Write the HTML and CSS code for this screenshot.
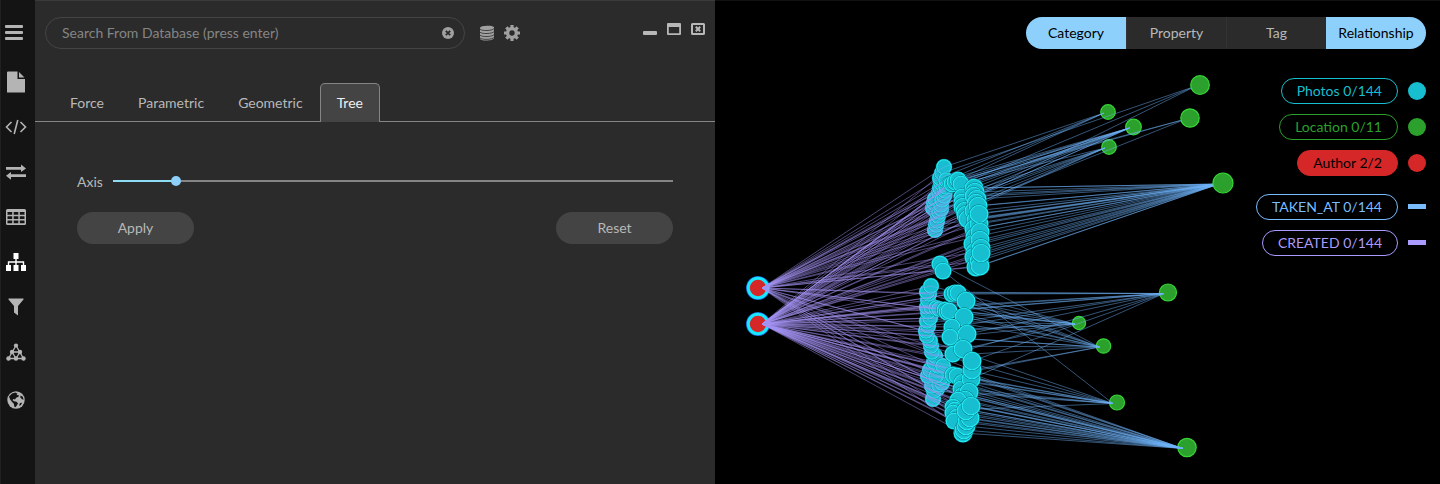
FILE: index.html
```html
<!DOCTYPE html>
<html lang="en">
<head>
<meta charset="utf-8">
<meta name="viewport" content="width=device-width, initial-scale=1">
<title>Graph explorer</title>
<link rel="stylesheet" href="styles.css">
</head>
<body>
<div class="app">
  <nav class="rail" aria-label="Tools">
    <button class="rail-btn rail-menu" aria-label="Menu"><svg width="18" height="16" viewBox="0 0 18 16"><path d="M1 1.500h16M1 7.500h16M1 13.500h16" stroke="currentColor" stroke-width="2.800" stroke-linecap="round"/></svg></button>
    <button class="rail-btn" aria-label="File"><svg width="18" height="22" viewBox="0 0 18 22"><path fill="currentColor" d="M1 .5h9.500v7.500H18V21a.6.6 0 0 1-.6.6H.6A.6.6 0 0 1 0 21V1.500a1 1 0 0 1 1-1zM12 1l5.500 5.500H12z"/></svg></button>
    <button class="rail-btn" aria-label="Code"><svg width="22" height="16" viewBox="0 0 22 16"><path d="M6.500 3 1.500 8l5 5M15.500 3l5 5-5 5M12.800 1 9.200 15" fill="none" stroke="currentColor" stroke-width="1.600"/></svg></button>
    <button class="rail-btn" aria-label="Swap"><svg width="22" height="16" viewBox="0 0 22 16"><path fill="currentColor" d="M1 3h15V.5L21 4.500 16 8V5.800H1zM21 10.300H6V8L1 11.700l5 4V13h15z"/></svg></button>
    <button class="rail-btn" aria-label="Table"><svg width="20" height="16" viewBox="0 0 20 16"><path fill="currentColor" fill-rule="evenodd" d="M1.500 0h17A1.500 1.500 0 0 1 20 1.500v13a1.500 1.500 0 0 1-1.500 1.500h-17A1.500 1.500 0 0 1 0 14.500v-13A1.500 1.500 0 0 1 1.500 0zM1.500 3v2.800h4.700V3zm6.200 0v2.800h4.600V3zm6.100 0v2.800h4.700V3zM1.500 7.200v2.800h4.700V7.200zm6.200 0v2.800h4.600V7.200zm6.100 0v2.800h4.700V7.200zM1.500 11.500v2.800h4.700v-2.800zm6.200 0v2.800h4.600v-2.800zm6.100 0v2.800h4.700v-2.800z"/></svg></button>
    <button class="rail-btn rail-active" aria-label="Layout"><svg width="22" height="18" viewBox="0 0 22 18"><path fill="currentColor" d="M8.500 0h5v6h-5zM1 12h5v6H1zM8.500 12h5v6h-5zM16 12h5v6h-5z"/><path d="M11 5v8M3.500 12.500V9h15v3.500" fill="none" stroke="currentColor" stroke-width="1.400"/></svg></button>
    <button class="rail-btn" aria-label="Filter"><svg width="16" height="18" viewBox="0 0 16 18"><path fill="currentColor" d="M.5.500h15v1L10 8v9.500L6 14.500V8L.5 1.500z"/></svg></button>
    <button class="rail-btn" aria-label="Network"><svg width="20" height="18" viewBox="0 0 20 18"><path d="M10 2.500 2.500 15.500h15zM6 9h8l-4 6.500z" fill="none" stroke="currentColor" stroke-width="1.300"/><g fill="currentColor"><circle cx="10" cy="2.500" r="2.100"/><circle cx="6" cy="9" r="2.200"/><circle cx="14" cy="9" r="2.200"/><circle cx="2.500" cy="15.500" r="2.200"/><circle cx="10" cy="15.500" r="2.200"/><circle cx="17.500" cy="15.500" r="2.200"/></g></svg></button>
    <button class="rail-btn rail-globe" aria-label="Globe"><svg width="18" height="18" viewBox="0 0 18 18"><circle cx="9" cy="9" r="8.700" fill="currentColor"/><path fill="#141414" d="M5 2.500 8.500 1.500l2 1.200-1 1.300 2.500.2-.5 1.600-2.300 1L8 8.500 6.300 8 5.500 9.200l1.600 1 2.400.5 1.500 1.500-1 2-1.600 2-1-.5-.6-3-1.900-2L3 8.300 2 5.600zM13.500 4.500l2.300 1.200.8 3-1.500-.4-1.800-1.700zM13 12l2.200-.3-1.500 2.500-1.700.6z"/></svg></button>
  </nav>

  <main class="panel">
    <header class="bar">
      <form class="search">
        <input class="search-input" type="text" aria-label="Search from database" placeholder="Search From Database (press enter)">
        <button class="icon-btn" type="reset" aria-label="Clear"><svg width="12" height="12" viewBox="0 0 12 12"><circle cx="6" cy="6" r="6" fill="currentColor"/><path d="m3.800 3.800 4.400 4.400M8.200 3.800 3.800 8.200" stroke="#2b2b2b" stroke-width="1.800"/></svg></button>
      </form>
      <button class="icon-btn" aria-label="Database"><svg width="16" height="16" viewBox="0 0 16 16"><path fill="currentColor" d="M1 3C1 .5 15 0 15 2.500V13c0 3-14 3.500-14 .5z"/><path d="M1 4.200c2 2 12 1.700 14-.5M1 7.200c2 2 12 1.700 14-.5M1 10.200c2 2 12 1.700 14-.5M1 13c2 2 12 1.700 14-.5" fill="none" stroke="#2b2b2b" stroke-width=".8"/></svg></button>
      <button class="icon-btn" aria-label="Settings"><svg width="16" height="16" viewBox="0 0 16 16"><circle cx="8" cy="8" r="4.400" fill="none" stroke="currentColor" stroke-width="3.400"/><path d="M8 0v3M8 13v3M0 8h3M13 8h3M2.300 2.300l2 2M11.700 11.700l2 2M13.700 2.300l-2 2M4.300 11.700l-2 2" stroke="currentColor" stroke-width="3.200"/></svg></button>
      <div class="window-btns">
        <button class="icon-btn" aria-label="Minimize"><svg width="14" height="14" viewBox="0 0 14 14"><rect y="9" width="14" height="4" rx="1" fill="currentColor"/></svg></button>
        <button class="icon-btn" aria-label="Maximize"><svg width="14" height="14" viewBox="0 0 14 14"><path fill="currentColor" fill-rule="evenodd" d="M1 1h12a1 1 0 0 1 1 1v10a1 1 0 0 1-1 1H1a1 1 0 0 1-1-1V2a1 1 0 0 1 1-1zm.8 4v6.200h10.400V5z"/></svg></button>
        <button class="icon-btn" aria-label="Close"><svg width="14" height="14" viewBox="0 0 14 14"><rect x="1" y="2" width="12" height="10" rx=".5" fill="none" stroke="currentColor" stroke-width="2"/><path d="m4.800 4.800 4.400 4.400M9.200 4.800 4.800 9.200" stroke="currentColor" stroke-width="2"/></svg></button>
      </div>
    </header>

    <div class="tabs" role="tablist">
      <button class="tab" role="tab" aria-selected="false">Force</button>
      <button class="tab" role="tab" aria-selected="false">Parametric</button>
      <button class="tab" role="tab" aria-selected="false">Geometric</button>
      <button class="tab" role="tab" aria-selected="true">Tree</button>
    </div>

    <section class="controls">
      <div class="field">
        <label for="axis">Axis</label>
        <input class="slider" id="axis" type="range" min="0" max="100" step="0.5" value="10.5">
      </div>
      <div class="actions">
        <button class="action">Apply</button>
        <button class="action">Reset</button>
      </div>
    </section>
  </main>

  <section class="stage" aria-label="Graph">
    <svg class="graph" id="graph" viewBox="715 1 725 483" preserveAspectRatio="xMinYMin meet"></svg>
    <div class="overlay">
      <div class="segments">
        <button class="segment on">Category</button>
        <button class="segment">Property</button>
        <button class="segment">Tag</button>
        <button class="segment on">Relationship</button>
      </div>
      <ul class="legend">
        <li class="entry photos"><button class="pill">Photos 0/144</button><span class="dot"></span></li>
        <li class="entry location"><button class="pill">Location 0/11</button><span class="dot"></span></li>
        <li class="entry author"><button class="pill">Author 2/2</button><span class="dot"></span></li>
      </ul>
      <ul class="legend">
        <li class="entry taken"><button class="pill">TAKEN_AT 0/144</button><span class="dash"></span></li>
        <li class="entry created"><button class="pill">CREATED 0/144</button><span class="dash"></span></li>
      </ul>
    </div>
  </section>
</div>
<script src="graph.js"></script>
</body>
</html>
```
FILE: styles.css
```css
* { box-sizing: border-box; }
body {
  margin: 0;
  background: #000;
  color: #b8b8b8;
  font: 14px/18px Lato, "Liberation Sans", sans-serif;
}
button, input { font: inherit; color: inherit; }
button { margin: 0; padding: 0; border: 0; background: none; cursor: pointer; }
svg { display: block; }

.app {
  display: grid;
  grid-template-columns: 35px 680fr 725fr;
  min-height: 100vh;
}

.rail {
  display: flex;
  flex-direction: column;
  padding: 10px 5px 0 0;
  background: #141414;
  border-left: 1px solid #202020;
}
.rail-btn {
  display: grid;
  place-items: center;
  height: 45px;
  color: #b4b4b4;
}
.rail-menu { margin: 0 4px 4px 0; }
.rail-active { color: #fff; }
.rail-globe { margin-top: 3px; }

.panel { background: #2b2b2b; border-top: 1px solid #3a3a3a; }
.bar {
  display: flex;
  align-items: center;
  gap: 9px;
  padding: 16px 10px 0;
}
.search {
  display: flex;
  align-items: center;
  flex: 0 1 420px;
  height: 32px;
  margin-right: 5px;
  padding: 0 10px 0 16px;
  border: 1px solid #444;
  border-radius: 16px;
}
.search-input {
  flex: 1;
  min-width: 0;
  padding: 0;
  border: 0;
  outline: 0;
  background: none;
}
.search-input::placeholder { color: #858585; opacity: 1; }
.icon-btn { color: #a0a0a0; }
.window-btns {
  display: flex;
  gap: 10px;
  margin: 0 0 8px auto;
}
.window-btns .icon-btn { color: #b8b8b8; }

.tabs {
  display: flex;
  margin-top: 34px;
  padding-left: 18px;
  border-bottom: 1px solid #858585;
}
.tab {
  height: 39px;
  margin-bottom: -1px;
  padding: 0 16px;
  border: 1px solid transparent;
  border-bottom: 0;
  border-radius: 5px 5px 0 0;
}
.tab[aria-selected="true"] {
  background: #444;
  border-color: #858585;
  color: #f0f0f0;
}

.controls { padding: 51px 42px 0; }
.field { display: flex; align-items: center; gap: 10px; }
.slider {
  flex: 1;
  min-width: 0;
  height: 10px;
  margin: 0 0 2px;
  appearance: none;
  background: linear-gradient(90deg, #8ddcf4 11%, #858585 11%) center / 100% 2px no-repeat;
}
.slider::-webkit-slider-thumb {
  appearance: none;
  width: 10px;
  height: 10px;
  border-radius: 50%;
  background: #8dd0fb;
}
.actions {
  display: flex;
  justify-content: space-between;
  margin-top: 21px;
}
.action {
  width: 117px;
  height: 32px;
  border-radius: 16px;
  background: #444;
}

.stage { display: grid; background: #000; border-top: 1px solid #111; }
.graph { grid-area: 1 / 1; width: 100%; }
.overlay {
  grid-area: 1 / 1;
  z-index: 1;
  display: flex;
  flex-direction: column;
  align-items: flex-end;
  padding: 16px 14px 0;
}
.segments {
  display: grid;
  grid-template-columns: repeat(4, 100px);
  height: 32px;
  margin-bottom: 29px;
  border-radius: 16px;
  overflow: hidden;
}
.segment { background: #2b2b2b; }
.segment + .segment { border-left: 1px solid #333; }
.segment.on { background: #8dd0fb; border: 0; color: #000; }

.legend {
  display: grid;
  gap: 10px;
  margin: 0 0 18px;
  padding: 0;
  list-style: none;
}
.entry { display: flex; justify-content: flex-end; align-items: center; gap: 10px; }
.pill {
  height: 26px;
  padding: 0 15px;
  border: 1px solid currentColor;
  border-radius: 13px;
}
.dot { width: 18px; height: 18px; border-radius: 50%; background: currentColor; }
.dash { width: 18px; height: 5px; margin-bottom: 2px; background: currentColor; }
.photos { color: #17becf; }
.location { color: #2ca02c; }
.author { color: #d62728; }
.author .pill { background: #d62728; border-color: #d62728; color: #000; }
.taken { color: #79bdff; }
.created { color: #a99bff; }

.links { fill: none; }
.link-created { stroke: #a494f4; stroke-width: 0.9; opacity: 0.52; }
.link-taken { stroke: #70b4fb; stroke-width: 0.9; opacity: 0.52; }
.node-photo { fill: #17becf; stroke: #22ecf4; stroke-width: 1.1; }
.node-shade { fill: #087482; }
.node-location { fill: #2ca02c; stroke: #36d636; stroke-width: 1.2; }
.node-author { fill: #d62728; stroke: #18e8ff; stroke-width: 3; }
.node-halo { fill: #1668d8; }
```
FILE: graph.js
```js
const svg = document.getElementById('graph');

const authors = [[758, 288], [758, 324]];

// x, y, radius, drawn above its links
const locations = [
  [1108, 112, 7.3, 0], [1200, 85, 9.3, 1], [1133.500, 127, 7.8, 0], [1190, 118, 9.2, 1],
  [1109, 147, 7.3, 0], [1223, 183, 10, 1], [1168, 292.500, 8.500, 0], [1079, 323, 6.600, 0],
  [1103.500, 346, 7.200, 0], [1117, 402.500, 7.500, 0], [1187, 447.500, 9.200, 0]
];

// Each photo: x, y, location index. Drawn back to front.
const backPhotos = [
  [935,230,5],[936,225,5],[937,221,4],[933,208,2],[934,203,4],[935,199,2],[938,216,4],[939,212,2],
  [941,209,4],[939,193,2],[940,188,0],[941,205,4],[942,200,2],[944,196,5],[945,191,2],[941,183,0],
  [940,178,0],[942,173,1],[944,167,0],[946,187,4],[946,180,2],[950,184,2],
  [933,399,10],[937,389,10],[934,391,9],[932,386,10],[928,376,9],[930,370,10],[939,385,10],
  [942,383,10],[941,378,10],[940,372,9],[936,376,9],[938,366,10],[934,362,9],[935,356,8],
  [932,352,9],[931,346,8],[930,341,9],[927,336,8],[926,331,7],[928,326,6],[927,321,7],
  [930,318,8],[928,312,6],[927,307,7],[931,307,6],[928,300,7],[929,294,8],[927,292,6],[931,286,7],
  [936,308,6],[939,309,7],[943,366,10]
];
const frontPhotos = [
  [952,184,3],[955,182,2],[958,180,3],[961,184,1],[962,197,5],[962,202,2],[963,207,5],
  [965,211,4],[966,215,5],[968,219,5],[974,188,5],[975,192,5],[974,196,1],[977,199,5],[976,203,3],
  [974,211,5],[976,220,5],[974,229,5],[975,237,5],[973,244,5],[975,252,5],[974,257,5],[976,267,5],
  [978,206,5],[979,224,5],[979,214,5],[980,232,5],[980,240,5],[979,261,5],[981,248,5],
  [980,266,5],[981,253,5],[940,264,8],[943,271,9],
  [952,294,6],[955,293,8],[958,293,6],[966,301,7],[945,310,8],[947,312,7],[949,311,6],[964,317,8],
  [951,338,8],[952,331,7],[952,327,6],[967,334,6],[953,354,6],[950,337,7],[963,349,7],
  [953,375,8],[957,376,9],[963,383,10],[961,389,9],[971,379,6],[972,370,8],[972,361,6],
  [963,396,10],[969,392,9],[965,400,10],[958,400,10],[953,407,10],[955,410,9],[953,413,10],
  [957,417,10],[954,421,10],[963,433,10],[964,430,10],[966,426,10],[967,421,10],[970,418,10],
  [966,411,10],[971,406,10]
];

function add(parent, name, attrs) {
  const el = document.createElementNS('http://www.w3.org/2000/svg', name);
  for (const key in attrs) el.setAttribute(key, attrs[key]);
  parent.appendChild(el);
  return el;
}
function circle(kind, x, y, r) {
  add(svg, 'circle', { class: kind, cx: x, cy: y, r: r });
}
function photoNode(x, y, r) {
  circle('node-shade', x, y, r + 1);
  circle('node-photo', x, y, r);
}
function line(group, kind, a, b) {
  add(group, 'line', { class: kind, x1: a[0], y1: a[1], x2: b[0], y2: b[1] });
}

authors.forEach(([x, y]) => {
  circle('node-halo', x, y, 12);
  circle('node-author', x, y, 9.700);
});
locations.filter(l => !l[3]).forEach(([x, y, r]) => circle('node-location', x, y, r));
backPhotos.forEach(([x, y]) => photoNode(x, y, 7.3));

const links = add(svg, 'g', { class: 'links' });
backPhotos.concat(frontPhotos).forEach((photo, i) => {
  const lower = photo[1] > 280;
  const author = lower ? (i % 4 === 0 ? 0 : 1) : i % 2;
  const [ax, ay] = authors[author];
  line(links, 'link-created', [ax + 4, ay], photo);
  const target = locations[photo[2]];
  line(links, 'link-taken', photo, [target[0] - 4, target[1] + 1]);
});

// Links of photos hidden behind a node that is already drawn
[[972,188,5],[980,218,5],[980,228,5],[981,244,5],[981,258,5],[955,180,2],[965,186,2],
 [970,410,10],[970,414,10],[968,395,10],[964,404,10],[972,374,10],[966,302,8]].forEach((photo) => {
  const target = locations[photo[2]];
  line(links, 'link-taken', photo, [target[0] - 4, target[1] + 1]);
  line(links, 'link-created', [authors[1][0] + 4, authors[1][1]], photo);
});

frontPhotos.forEach(([x, y]) => photoNode(x, y, x > 962 ? 8.8 : 7.8));
locations.filter(l => l[3]).forEach(([x, y, r]) => circle('node-location', x, y, r));
```
